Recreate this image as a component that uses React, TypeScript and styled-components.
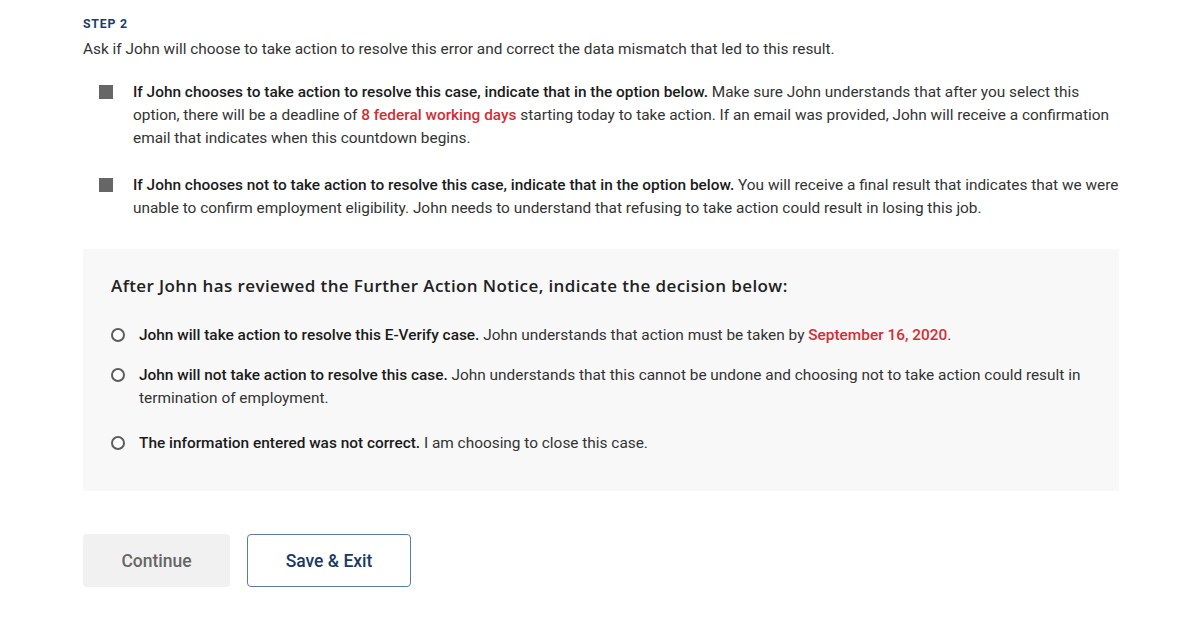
import React from "react";
import styled, { createGlobalStyle } from "styled-components";

const Global = createGlobalStyle`
  html, body { margin: 0; padding: 0; background: #fff; }
  body { font-family: Roboto, "Liberation Sans", Arial, sans-serif; color: #333; }
`;

const Page = styled.main`
  width: 1036px;
  padding: 16px 0 0 83px;
`;

const StepLabel = styled.div`
  font-size: 12.3px;
  font-weight: 700;
  letter-spacing: 0.8px;
  color: #1a3e6b;
  line-height: 16px;
`;

const Intro = styled.p`
  margin: 7px 0 0;
  font-size: 15.4px;
  line-height: 20px;
  color: #333;
`;

const BulletList = styled.ul`
  list-style: none;
  margin: 22px 0 0;
  padding: 0 0 0 16px;
  display: flex;
  flex-direction: column;
  gap: 24px;
`;

const BulletItem = styled.li`
  display: flex;
  align-items: flex-start;
  gap: 20px;
  font-size: 15.4px;
  line-height: 23px;
  color: #333;
`;

const Square = styled.span`
  flex: none;
  width: 14px;
  height: 14px;
  margin-top: 4px;
  background: #666;
`;

const Strong = styled.strong`
  font-weight: 500;
  color: #1b1b1b;
`;

const Red = styled.span`
  color: #d42c35;
  font-weight: 500;
`;

const Panel = styled.section`
  margin-top: 29px;
  background: #f8f8f8;
  padding: 26px 28px 36px;
`;

const PanelTitle = styled.h2`
  margin: 0;
  font-family: "Open Sans", "Noto Sans", sans-serif;
  font-weight: 600;
  font-size: 17px;
  letter-spacing: 0.4px;
  line-height: 22px;
  color: #222;
`;

const Options = styled.div`
  margin-top: 27px;
  display: flex;
  flex-direction: column;
`;

const Option = styled.label<{ $gapBefore?: number }>`
  display: flex;
  align-items: flex-start;
  gap: 14px;
  margin-top: ${(p) => p.$gapBefore ?? 0}px;
  font-size: 15.4px;
  line-height: 23px;
  color: #333;
  cursor: pointer;
`;

const Radio = styled.span`
  flex: none;
  box-sizing: border-box;
  width: 14px;
  height: 14px;
  margin-top: 4px;
  border: 2px solid #5c5c5c;
  border-radius: 50%;
  background: #fff;
`;

const Buttons = styled.div`
  margin-top: 43px;
  display: flex;
  gap: 17px;
`;

const Button = styled.button<{ $variant: "disabled" | "outline" }>`
  box-sizing: border-box;
  height: 53px;
  padding: 0;
  width: ${(p) => (p.$variant === "disabled" ? "147px" : "164px")};
  border-radius: 4px;
  font-family: Roboto, "Liberation Sans", sans-serif;
  font-size: 17.5px;
  font-weight: 500;
  background: ${(p) => (p.$variant === "disabled" ? "#f1f1f1" : "#fff")};
  color: ${(p) => (p.$variant === "disabled" ? "#666" : "#1b3a63")};
  border: ${(p) => (p.$variant === "disabled" ? "none" : "1px solid #5a7ba3")};
  cursor: pointer;
`;

export default function App() {
  return (
    <>
      <Global />
      <Page>
        <StepLabel>STEP 2</StepLabel>
        <Intro>
          Ask if John will choose to take action to resolve this error and correct the data mismatch that led to this result.
        </Intro>
        <BulletList>
          <BulletItem>
            <Square />
            <div>
              <Strong>If John chooses to take action to resolve this case, indicate that in the option below.</Strong>{" "}
              Make sure John understands that after you select this option, there will be a deadline of{" "}
              <Red>8 federal working days</Red> starting today to take action. If an email was provided, John will
              receive a confirmation email that indicates when this countdown begins.
            </div>
          </BulletItem>
          <BulletItem>
            <Square />
            <div>
              <Strong>If John chooses not to take action to resolve this case, indicate that in the option below.</Strong>{" "}
              You will receive a final result that indicates that we were unable to confirm employment eligibility. John
              needs to understand that refusing to take action could result in losing this job.
            </div>
          </BulletItem>
        </BulletList>
        <Panel>
          <PanelTitle>After John has reviewed the Further Action Notice, indicate the decision below:</PanelTitle>
          <Options>
            <Option>
              <Radio />
              <div>
                <Strong>John will take action to resolve this E-Verify case.</Strong> John understands that action must
                be taken by <Red>September 16, 2020</Red>.
              </div>
            </Option>
            <Option $gapBefore={17}>
              <Radio />
              <div>
                <Strong>John will not take action to resolve this case.</Strong> John understands that this cannot be
                undone and choosing not to take action could result in termination of employment.
              </div>
            </Option>
            <Option $gapBefore={22}>
              <Radio />
              <div>
                <Strong>The information entered was not correct.</Strong> I am choosing to close this case.
              </div>
            </Option>
          </Options>
        </Panel>
        <Buttons>
          <Button $variant="disabled">Continue</Button>
          <Button $variant="outline">Save &amp; Exit</Button>
        </Buttons>
      </Page>
    </>
  );
}
